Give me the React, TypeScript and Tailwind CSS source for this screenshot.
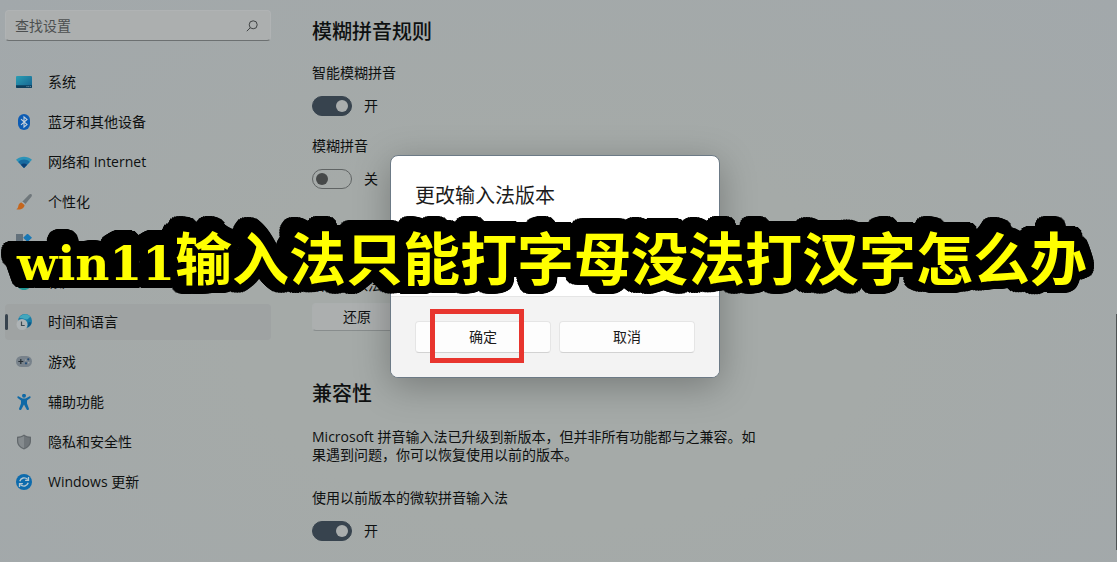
import { ReactNode } from "react";

// round outline: each shadow widens the one before it a little, all the way round
const captionOutline = Array.from({ length: 16 }, (_, i) => {
  const a = (i / 16) * Math.PI * 2;
  return `drop-shadow(${(Math.cos(a) * 2.3).toFixed(2)}px ${(Math.sin(a) * 2.3).toFixed(2)}px 0 #000)`;
}).join(" ");

function Icon({ children }: { children: ReactNode }) {
  return (
    <svg viewBox="0 0 16 16" className="size-4 shrink-0" aria-hidden="true">
      {children}
    </svg>
  );
}

const items = [
  {
    label: "系统",
    icon: (
      <Icon>
        <defs>
          <linearGradient id="sys" x1="0" y1="0" x2="1" y2="1">
            <stop offset="0" stopColor="#2b9fb4" />
            <stop offset="1" stopColor="#14608f" />
          </linearGradient>
        </defs>
        <rect x="0" y="2" width="16" height="12" rx="1" fill="url(#sys)" />
        <path d="M0 11.2h16V13a1 1 0 0 1-1 1H1a1 1 0 0 1-1-1z" fill="#0d3e5c" />
        <path d="M10.5 12.6h1M12.3 12.6h1M14 12.6h.8" stroke="#8fb3c4" strokeWidth="0.8" />
      </Icon>
    ),
  },
  {
    label: "蓝牙和其他设备",
    icon: (
      <Icon>
        <rect x="2" y="0" width="12" height="16" rx="6" fill="#0d5cb4" />
        <path d="M5 5.2l6 5.4L8 13V3l3 2.4-6 5.4" fill="none" stroke="#c8d3dc" strokeWidth="1.1" />
      </Icon>
    ),
  },
  {
    label: "网络和 Internet",
    icon: (
      <Icon>
        <path d="M0 5.800C4.500 1.600 11.500 1.600 16 5.800L8 14z" fill="#2c93b8" />
        <path d="M2.200 8C5.800 4.800 10.200 4.800 13.800 8L8 14z" fill="#166aa0" />
        <path d="M4.800 10.700C6.900 9 9.100 9 11.200 10.700L8 14z" fill="#0d4075" />
      </Icon>
    ),
  },
  {
    label: "个性化",
    icon: (
      <Icon>
        <path d="M15.600.4c.6.600.3 1.600-.2 2.300L9 10.600 6 8l7-7.200c.8-.8 2-.9 2.600-.4z" fill="#6f777b" />
        <path d="M6.600 7.500l2.800 2.400-1 1.200-2.900-2.500z" fill="#a9aeb0" />
        <path d="M5.500 8.500l3 2.500c.3 2.600-3.300 5.400-8.200 4.300 1.900-1 1.700-2.400 2.200-4 .4-1.500 1.500-2.600 3-2.800z" fill="#c5661d" />
      </Icon>
    ),
  },
  {
    label: "应用",
    icon: (
      <Icon>
        <path d="M0 0h7v7H0z" fill="#63717b" />
        <path d="M0 8h7v7H0zM8 8h7v7H8z" fill="#4c5f6d" />
        <path d="M11.500 -0.500L16 3.800l-4.500 4.300L7.200 3.800z" fill="#1878b5" />
      </Icon>
    ),
  },
  {
    label: "帐户",
    icon: (
      <Icon>
        <circle cx="8" cy="4" r="4" fill="#1f9796" />
        <path d="M1 9h14c0 4.500-3 7-7 7s-7-2.500-7-7z" fill="#1f9796" />
      </Icon>
    ),
  },
  {
    label: "时间和语言",
    active: true,
    icon: (
      <Icon>
        <circle cx="9" cy="7" r="7" fill="#187ca6" />
        <path d="M3 4C6-.5 12-.8 14.500 3c-2 .5-2 2.500-4 2.500S7 3.500 3 4z" fill="#43a7bd" />
        <path d="M12.500 8l3 .5c-.5 2.500-2 4.300-4 5.200z" fill="#105987" />
        <circle cx="6" cy="10.500" r="5.500" fill="#aeb3b5" />
        <path d="M5.500 7.500v4h3.200" fill="none" stroke="#3c4a52" strokeWidth="1.200" />
      </Icon>
    ),
  },
  {
    label: "游戏",
    icon: (
      <Icon>
        <rect x="0" y="2" width="16" height="11" rx="5.500" fill="#78828b" />
        <path d="M4.800 5v5M2.300 7.500h5" stroke="#252d34" strokeWidth="1.200" />
        <circle cx="12.300" cy="5.300" r="1.100" fill="#244c77" />
        <circle cx="10" cy="9.300" r="1.100" fill="#244c77" />
        <circle cx="9.800" cy="6.100" r=".7" fill="#aab2b8" />
        <circle cx="12.800" cy="8.700" r=".7" fill="#aab2b8" />
      </Icon>
    ),
  },
  {
    label: "辅助功能",
    icon: (
      <Icon>
        <circle cx="8" cy="1.800" r="2" fill="#0f69a6" />
        <path
          d="M2.800 2.400L6.500 4.400h3l3.700-2c1.300-.5 2 1.200.8 1.900L11 6.500v3l1.900 5.100c.4 1.400-1.600 2-2.200.8L8 10.500l-2.700 4.900c-.6 1.200-2.600.6-2.200-.8L5 9.500v-3L2 4.300c-1.200-.7-.5-2.400.8-1.900z"
          fill="#0f69a6"
        />
      </Icon>
    ),
  },
  {
    label: "隐私和安全性",
    icon: (
      <Icon>
        <path d="M8 .5c2 1.500 4.500 2.200 7 2.300V7c0 4-2.500 6.700-7 8.500C3.500 13.700 1 11 1 7V2.800C3.500 2.700 6 2 8 .5z" fill="#62686c" />
        <path d="M8 2c1.800 1.200 3.800 1.700 5.800 1.900V7c0 3.400-2 5.600-5.800 7.200z" fill="#70767a" />
        <path d="M8 2C6.200 3.200 4.200 3.700 2.200 3.900V7c0 3.400 2 5.600 5.800 7.200z" fill="#858b8e" />
      </Icon>
    ),
  },
  {
    label: "Windows 更新",
    icon: (
      <Icon>
        <circle cx="8" cy="8" r="8" fill="#0d6bad" />
        <path d="M3.800 7.200C4.800 3.800 9 2.800 11.700 5.400M12.200 8.800c-1 3.400-5.200 4.400-7.900 1.800" fill="none" stroke="#b5c6d0" strokeWidth="1.400" />
        <path d="M12.500 3v3.400H9.100M3.500 13V9.600h3.400" fill="none" stroke="#b5c6d0" strokeWidth="1.300" />
      </Icon>
    ),
  },
];

function Toggle({ id, label, on }: { id: string; label: string; on?: boolean }) {
  return (
    <div className="flex flex-col gap-[13px]">
      <label htmlFor={id} className="leading-5">
        {label}
      </label>
      <div className="flex items-center gap-3">
        <span className="relative flex h-5 w-10">
          <input
            id={id}
            type="checkbox"
            role="switch"
            defaultChecked={on}
            className="peer h-5 w-10 appearance-none rounded-full border border-[#606464] checked:border-[#37434e] checked:bg-[#37434e]"
          />
          <span className="pointer-events-none absolute top-1 left-1 size-3 rounded-full bg-[#464949] peer-checked:left-6 peer-checked:bg-[#a9adad]" />
        </span>
        <span className="leading-5">{on ? "开" : "关"}</span>
      </div>
    </div>
  );
}

function Sidebar() {
  return (
    <aside className="w-[271px] shrink-0 pl-[5px] pt-[10px]">
      <div className="flex h-[31px] items-center rounded border border-[#b0b3b4] border-b-[#6c7071] bg-[#acafaf] pr-3 pl-[9px]">
        <input
          type="search"
          aria-label="查找设置"
          placeholder="查找设置"
          className="min-w-0 flex-1 bg-transparent outline-none placeholder:text-[#4c4f50]"
        />
        <svg viewBox="0 0 12 12" className="size-3" fill="none" stroke="#3f4243" aria-hidden="true">
          <circle cx="7.200" cy="4.800" r="4" />
          <path d="M4.300 7.700L.8 11.200" />
        </svg>
      </div>
      <nav className="mt-[23px] flex flex-col gap-1">
        {items.map((item) => (
          <a
            key={item.label}
            href="#"
            className={`relative flex h-9 items-center gap-4 rounded pl-[11px] ${item.active ? "bg-[#9fa3a3]" : ""}`}
          >
            {item.active && <span className="absolute top-[10px] left-0 h-4 w-[3px] rounded-full bg-[#37434e]" />}
            {item.icon}
            <span>{item.label}</span>
          </a>
        ))}
      </nav>
    </aside>
  );
}

function Dialog() {
  const button =
    "h-8 flex-1 rounded border border-[#e5e5e5] border-b-[#d2d2d2] bg-[#fdfdfd] text-center";
  return (
    <div className="absolute inset-0 flex items-start justify-center pt-[155px] pr-[7px]">
      <div
        role="dialog"
        aria-labelledby="dialog-title"
        className="w-[330px] overflow-hidden rounded-lg border border-[#6c7a86] bg-white text-[#1b1b1b] shadow-[0_8px_36px_rgba(0,0,0,0.28)]"
      >
        <div className="h-[140px] px-6 pt-[26px]">
          <h2 id="dialog-title" className="text-xl leading-7">
            更改输入法版本
          </h2>
        </div>
        <div className="flex gap-2 border-t border-[#e5e5e5] bg-[#f3f3f3] p-6">
          <button type="button" className={`relative ${button}`}>
            确定
            <span className="absolute -top-[13px] left-[14px] h-[54px] w-[94px] border-[5px] border-[#e8352e]" />
          </button>
          <button type="button" className={button}>
            取消
          </button>
        </div>
      </div>
    </div>
  );
}

export default function App() {
  return (
    <div className="relative flex min-h-screen overflow-hidden bg-[radial-gradient(ellipse_at_50%_60%,#a5aaa8_40%,#a2a8ab_100%)] font-['Open_Sans','Noto_Sans_CJK_SC',sans-serif] text-sm text-[#0e1010]">
      <Sidebar />

      <main className="flex-1 pt-[18px] pl-[41px]">
        <h1 className="text-xl leading-7 font-medium">模糊拼音规则</h1>
        <div className="mt-[17px] flex flex-col gap-5">
          <Toggle id="smart" label="智能模糊拼音" on />
          <Toggle id="fuzzy" label="模糊拼音" />
        </div>
        <h1 className="mt-8 text-xl leading-7 font-medium">默认设置</h1>
        <p className="mt-[26px] leading-5">拼音输入法默认设置</p>
        <button
          type="button"
          className="mt-2 h-7 w-[90px] rounded border border-[#abafaf] border-b-[#888d8d] bg-[#acafaf]"
        >
          还原
        </button>

        <h1 className="mt-[49px] text-xl leading-7 font-medium">兼容性</h1>
        <p className="mt-5 mb-6 max-w-[448px] leading-[18px]">
          Microsoft 拼音输入法已升级到新版本，但并非所有功能都与之兼容。如果遇到问题，你可以恢复使用以前的版本。
        </p>
        <Toggle id="legacy" label="使用以前版本的微软拼音输入法" on />
      </main>

      <Dialog />

      <div className="absolute top-[314px] right-0 h-[236px] w-px bg-[#4e5354]" />

      <div className="pointer-events-none absolute inset-x-0 top-[213px] flex justify-center pr-[13px]">
        <p
          className="font-['Noto_Sans_CJK_SC',sans-serif] text-[57px] leading-[84px] font-bold whitespace-nowrap text-[#ffff00]"
          style={{ filter: captionOutline }}
        >
          <span className="font-['DejaVu_Serif',serif] text-[47px]">win11</span>
          输入法只能打字母没法打汉字怎么办
        </p>
      </div>
    </div>
  );
}
